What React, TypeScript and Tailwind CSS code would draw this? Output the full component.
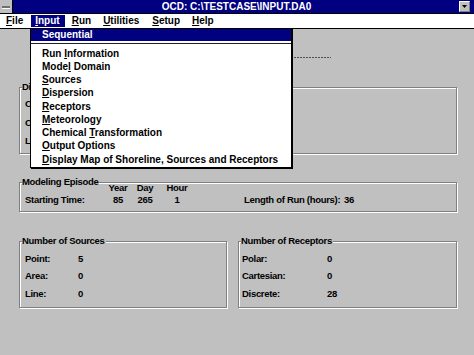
import React from "react";

const UI = "font-['Liberation_Sans',Arial,sans-serif]";
const BODY = "font-['Liberation_Sans',Arial,sans-serif] text-[9.5px] tracking-[-0.3px]";

function Group({
  title,
  className,
  children,
}: {
  title: string;
  className: string;
  children?: React.ReactNode;
}) {
  return (
    <div
      className={
        "relative border border-[#808080] shadow-[1px_1px_0_#ffffff,inset_1px_1px_0_#ffffff] " +
        className
      }
    >
      <span className="absolute top-[-7px] left-[2px] bg-[#c0c0c0] pr-[1px] leading-[12px] whitespace-nowrap">
        {title}
      </span>
      {children}
    </div>
  );
}

function MenuItem({ pre, u, post }: { pre?: string; u: string; post?: string }) {
  return (
    <div className="h-[13.25px] flex items-center pl-[11px] whitespace-nowrap">
      <span>
        {pre}
        <span className="underline underline-offset-[1px] decoration-1">{u}</span>
        {post}
      </span>
    </div>
  );
}

export default function App() {
  return (
    <div className="w-[474px] h-[355px] bg-[#c0c0c0] relative overflow-hidden font-bold text-black">
      {/* Title bar */}
      <div className={"h-[14px] bg-[#000080] border-b border-black flex items-stretch relative " + UI}>
        <div className="w-[13px] bg-[#c0c0c0] flex items-center justify-center border-r border-black">
          <div className="w-[8px] h-[2px] bg-[#707070] shadow-[0_1px_0_#ffffff]" />
        </div>
        <div className="flex-1 flex items-center justify-center text-white text-[10px] leading-none pl-[1px]">
          OCD: C:\TESTCASE\INPUT.DA0
        </div>
        <div className="w-[11px] my-[1px] mr-[4px] bg-[#c0c0c0] border-t border-l border-white border-b border-r border-b-[#808080] border-r-[#808080] flex items-center justify-center">
          <svg width="5" height="3" viewBox="0 0 5 3">
            <path d="M0 0H5L2.5 3Z" fill="#000" />
          </svg>
        </div>
      </div>

      {/* Menu bar */}
      <div className={"h-[15px] bg-white border-b border-black flex items-center text-[10px] leading-none " + UI}>
        <div className="pl-[6px] pr-[8px] h-[12px] flex items-center">
          <span>
            <span className="underline underline-offset-[1px] decoration-1">F</span>ile
          </span>
        </div>
        <div className="h-[12px] flex items-center bg-[#000080] text-white pl-[4px] pr-[5px]">
          <span>
            <span className="underline underline-offset-[1px] decoration-1">I</span>nput
          </span>
        </div>
        <div className="pl-[7px] pr-[6px] h-[12px] flex items-center">
          <span>
            <span className="underline underline-offset-[1px] decoration-1">R</span>un
          </span>
        </div>
        <div className="px-[6px] h-[12px] flex items-center">
          <span>
            <span className="underline underline-offset-[1px] decoration-1">U</span>tilities
          </span>
        </div>
        <div className="pl-[7px] pr-[6px] h-[12px] flex items-center">
          <span>
            <span className="underline underline-offset-[1px] decoration-1">S</span>etup
          </span>
        </div>
        <div className="px-[6px] h-[12px] flex items-center">
          <span>
            <span className="underline underline-offset-[1px] decoration-1">H</span>elp
          </span>
        </div>
      </div>

      {/* Client area */}
      <div className={"flex flex-col pl-[19px] leading-[12px] " + BODY}>
        <div className="h-[28px]" />
        <div className="ml-[221px] w-[91px] h-[1px] bg-[repeating-linear-gradient(90deg,#505050_0_2px,transparent_2px_3px)]" />

        <div className="mt-[29px] w-[438px] h-[67px] relative border border-[#808080] shadow-[1px_1px_0_#ffffff,inset_1px_1px_0_#ffffff]">
          <span className="absolute top-[-7px] left-[2px] bg-[#c0c0c0] leading-[12px] whitespace-nowrap">
            Di
          </span>
          <div className="pt-[7px] pl-[5px] flex flex-col">
            <div className="h-[18.5px] flex items-center">C</div>
            <div className="h-[18.5px] flex items-center">C</div>
            <div className="h-[18.5px] flex items-center">L</div>
          </div>
        </div>

        <Group title="Modeling Episode" className="mt-[28px] w-[438px] h-[30px]">
          <div className="flex flex-col">
            <div className="h-[10px] flex items-center">
              <div className="w-[84px]" />
              <div className="w-[28px] text-center">Year</div>
              <div className="w-[26px] text-center">Day</div>
              <div className="w-[38px] text-center">Hour</div>
            </div>
            <div className="h-[13px] flex items-center pl-[5px]">
              <div className="w-[79px]">Starting Time:</div>
              <div className="w-[28px] text-center">85</div>
              <div className="w-[26px] text-center">265</div>
              <div className="w-[38px] text-center">1</div>
              <div className="ml-[48px] w-[100px] whitespace-nowrap">Length of Run (hours):</div>
              <div>36</div>
            </div>
          </div>
        </Group>

        <div className="mt-[29px] flex gap-[11px]">
          <Group title="Number of Sources" className="w-[208px] h-[67px]">
            <div className="pt-[8px] pl-[5px] flex flex-col">
              <div className="h-[17.67px] flex items-center">
                <div className="w-[53px]">Point:</div>
                <div>5</div>
              </div>
              <div className="h-[17.67px] flex items-center">
                <div className="w-[53px]">Area:</div>
                <div>0</div>
              </div>
              <div className="h-[17.67px] flex items-center">
                <div className="w-[53px]">Line:</div>
                <div>0</div>
              </div>
            </div>
          </Group>
          <Group title="Number of Receptors" className="w-[219px] h-[67px]">
            <div className="pt-[8px] pl-[3px] flex flex-col">
              <div className="h-[17.67px] flex items-center">
                <div className="w-[85px]">Polar:</div>
                <div>0</div>
              </div>
              <div className="h-[17.67px] flex items-center">
                <div className="w-[85px]">Cartesian:</div>
                <div>0</div>
              </div>
              <div className="h-[17.67px] flex items-center">
                <div className="w-[85px]">Discrete:</div>
                <div>28</div>
              </div>
            </div>
          </Group>
        </div>
      </div>

      {/* Drop-down menu */}
      <div
        className={
          "absolute left-[30px] top-[28px] w-[262px] h-[140px] bg-white border border-black shadow-[1px_1px_0_#000000] text-[10px] leading-none flex flex-col " +
          UI
        }
      >
        <div className="h-[12px] bg-[#000080] text-white flex items-center pl-[11px]">Sequential</div>
        <div className="mt-[2px] h-[1px] bg-[#202020]" />
        <div className="mt-[3px] flex flex-col">
          <MenuItem pre="Run " u="I" post="nformation" />
          <MenuItem pre="Mode" u="l" post=" Domain" />
          <MenuItem u="S" post="ources" />
          <MenuItem u="D" post="ispersion" />
          <MenuItem u="R" post="eceptors" />
          <MenuItem u="M" post="eteorology" />
          <MenuItem pre="Chemical " u="T" post="ransformation" />
          <MenuItem u="O" post="utput Options" />
          <MenuItem u="D" post="isplay Map of Shoreline, Sources and Receptors" />
        </div>
      </div>
    </div>
  );
}
